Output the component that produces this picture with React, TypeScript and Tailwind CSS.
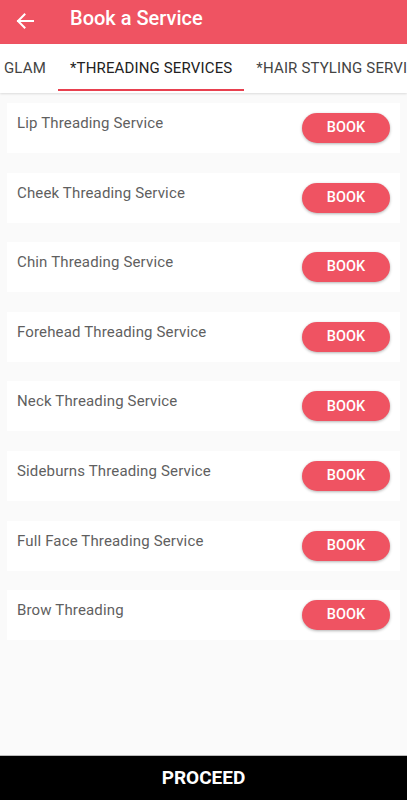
import React from "react";

const services = [
  "Lip Threading Service",
  "Cheek Threading Service",
  "Chin Threading Service",
  "Forehead Threading Service",
  "Neck Threading Service",
  "Sideburns Threading Service",
  "Full Face Threading Service",
  "Brow Threading",
];

export default function App() {
  return (
    <div
      className="w-[407px] h-[800px] flex flex-col bg-[#fafafa] overflow-hidden"
      style={{ fontFamily: "Roboto, 'Noto Sans', sans-serif" }}
    >
      <div className="h-[44px] bg-[#ef5362] flex items-center shrink-0">
        <div className="w-[70px] pl-[16px] flex items-center -mt-[2px]">
          <svg width="19" height="16" viewBox="0 0 19 16" fill="none" stroke="white" strokeWidth="2" strokeLinecap="square">
            <path d="M2 8H17" />
            <path d="M8.5 1.5L2 8L8.5 14.5" />
          </svg>
        </div>
        <div className="text-white text-[20px] font-medium leading-none -mt-[9px]">Book a Service</div>
      </div>
      <div className="h-[49px] bg-white flex items-stretch shrink-0 shadow-[0_1px_2px_rgba(0,0,0,0.12)] overflow-hidden whitespace-nowrap relative z-10 tracking-[0.15px]">
        <div className="flex items-center pl-[4px] pr-[12px] text-[15px] text-[#444]">GLAM</div>
        <div className="relative flex items-center px-[12px] text-[15px] text-[#222]">
          *THREADING SERVICES
          <div className="absolute left-0 right-0 bottom-[2px] h-[2px] bg-[#e8404f]" />
        </div>
        <div className="flex items-center pl-[12px] text-[15px] text-[#444]">*HAIR STYLING SERVICES</div>
      </div>
      <div className="flex-1 flex flex-col gap-[19.6px] px-[7px] pt-[10px]">
        {services.map((s) => (
          <div key={s} className="h-[50px] bg-white flex justify-between items-start pl-[10px] pr-[10px]">
            <div className="pt-[10px] text-[15px] text-[#5f5f5f] leading-[20px] tracking-[0.15px]">{s}</div>
            <button className="mt-[10px] w-[88px] h-[30px] rounded-full bg-[#ef5362] text-white text-[14.5px] font-medium shadow-[0_1px_3px_rgba(0,0,0,0.3)]">
              BOOK
            </button>
          </div>
        ))}
      </div>
      <div className="h-[45px] bg-black border-t border-[#bbb] flex items-center justify-center shrink-0">
        <span className="text-white text-[19px] font-bold">PROCEED</span>
      </div>
    </div>
  );
}
